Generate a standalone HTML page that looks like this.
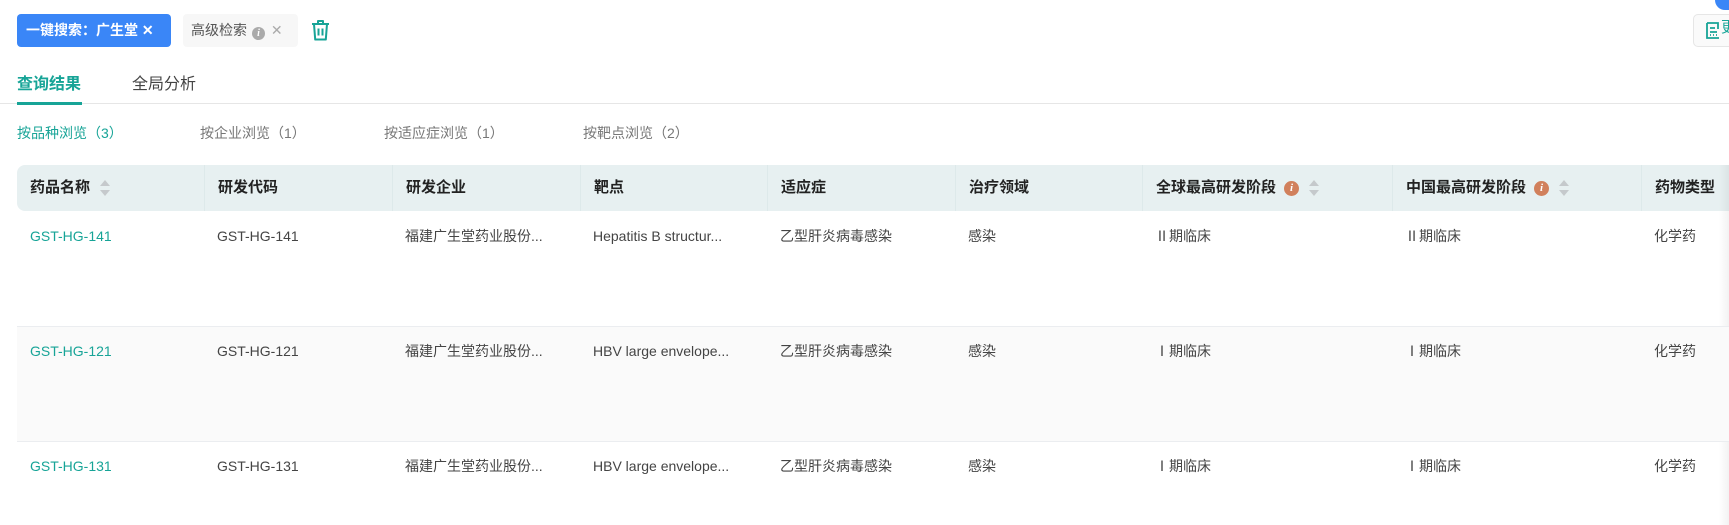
<!DOCTYPE html>
<html><head><meta charset="utf-8"><style>
*{margin:0;padding:0;box-sizing:border-box}
body{width:1729px;height:525px;overflow:hidden;background:#fff;font-family:"Liberation Sans","Noto Sans CJK SC",sans-serif;position:relative;color:#333}
.abs{position:absolute}
.tag1{left:17px;top:14px;width:154px;height:33px;background:#3a86f7;border-radius:4px;color:#fff;font-size:14px;line-height:33px;padding-left:9px;font-weight:bold}
.tag2{left:183px;top:14px;width:115px;height:33px;background:#f7f7f7;border-radius:4px;color:#555;font-size:14px;line-height:33px;padding-left:8px}
.info{display:inline-block;width:13px;height:13px;border-radius:50%;background:#aaa;color:#fff;font-size:10px;line-height:13px;text-align:center;font-style:italic;font-weight:bold;vertical-align:-1px;margin-left:5px;font-family:"Liberation Serif",serif}
.tab{top:70px;font-size:16px}
.line{left:0;top:103px;width:1729px;height:1px;background:#e6e6e6}
.sub{top:123px;font-size:14px;color:#777}
.th{top:165px;height:46px;background:#e7f0f1;left:17px;width:1712px;border-radius:8px 0 0 8px}
.hc{top:165px;height:46px;line-height:46px;font-size:15px;font-weight:bold;color:#222;padding-left:13px;border-left:1px solid #dde9ea}
.sort{display:inline-block;vertical-align:middle;margin-left:10px;width:10px;height:16px;position:relative}
.sort:before{content:"";position:absolute;top:0;left:0;border:5px solid transparent;border-bottom:6px solid #c5c9cc;border-top:0}
.sort:after{content:"";position:absolute;bottom:0;left:0;border:5px solid transparent;border-top:6px solid #c5c9cc;border-bottom:0}
.oi{display:inline-block;width:15px;height:15px;border-radius:50%;background:#d1805c;color:#fff;font-size:11px;line-height:15px;text-align:center;font-style:italic;font-family:"Liberation Serif",serif;vertical-align:middle;margin-left:8px}
.row{left:17px;width:1712px;border-top:1px solid #ebedf0}
.c{font-size:14px;color:#444;padding-left:13px;line-height:20px;height:20px}
.teal{color:#17a497}
</style></head><body>
<div class="abs tag1">一键搜索：广生堂 ✕</div>
<div class="abs tag2">高级检索<span class="info">i</span> <span style="color:#aaa;margin-left:2px">✕</span></div>
<svg class="abs" style="left:310px;top:19px" width="21" height="23" viewBox="0 0 21 23" fill="none" stroke="#17a497" stroke-width="2" stroke-linejoin="round"><path d="M2 5h17M8 5V2h5v3M4 5l1.2 15.5h10.6L17 5M8.5 9.5v7M12.5 9.5v7"/></svg>
<div class="abs" style="left:1693px;top:14px;width:50px;height:33px;border:1px solid #e6e6e6;border-radius:5px;background:#fafafa"></div>
<svg class="abs" style="left:1705px;top:22px" width="16" height="17" viewBox="0 0 16 17" fill="none" stroke="#17a497" stroke-width="1.8"><path d="M2 1h11v6M2 1v15h12M5 6h5M5 10h7M5 13h1M8 13h1M11 13h1"/></svg>
<div class="abs" style="left:1721px;top:16px;font-size:15px;color:#17a497">更</div>
<div class="abs" style="left:1715px;top:-4px;width:18px;height:14px;border-radius:0 0 0 10px;background:#3a86f7"></div>
<div class="abs tab teal" style="left:17px;font-weight:bold">查询结果</div>
<div class="abs tab" style="left:132px;color:#444">全局分析</div>
<div class="abs line"></div>
<div class="abs" style="left:17px;top:102px;width:65px;height:3px;background:#17a497"></div>
<div class="abs sub teal" style="left:17px">按品种浏览（3）</div>
<div class="abs sub" style="left:200px">按企业浏览（1）</div>
<div class="abs sub" style="left:384px">按适应症浏览（1）</div>
<div class="abs sub" style="left:583px">按靶点浏览（2）</div>
<div class="abs th"></div>
<div class="abs hc" style="left:17px;border:0">药品名称<span class="sort"></span></div>
<div class="abs hc" style="left:204px">研发代码</div>
<div class="abs hc" style="left:392px">研发企业</div>
<div class="abs hc" style="left:580px">靶点</div>
<div class="abs hc" style="left:767px">适应症</div>
<div class="abs hc" style="left:955px">治疗领域</div>
<div class="abs hc" style="left:1142px">全球最高研发阶段<span class="oi">i</span><span class="sort"></span></div>
<div class="abs hc" style="left:1392px">中国最高研发阶段<span class="oi">i</span><span class="sort"></span></div>
<div class="abs hc" style="left:1641px;width:88px">药物类型</div>
<div class="abs" style="left:1719px;top:165px;width:10px;height:360px;background:linear-gradient(to right,rgba(0,0,0,0),rgba(0,0,0,0.05))"></div>
<div class="abs row" style="top:326px;height:116px;background:#fafafa"></div>
<div class="abs row" style="top:441px;height:84px"></div>

<div class="abs c teal" style="left:17px;top:226px">GST-HG-141</div>
<div class="abs c" style="left:204px;top:226px">GST-HG-141</div>
<div class="abs c" style="left:392px;top:226px">福建广生堂药业股份...</div>
<div class="abs c" style="left:580px;top:226px">Hepatitis B structur...</div>
<div class="abs c" style="left:767px;top:226px">乙型肝炎病毒感染</div>
<div class="abs c" style="left:955px;top:226px">感染</div>
<div class="abs c" style="left:1142px;top:226px">Ⅱ期临床</div>
<div class="abs c" style="left:1392px;top:226px">Ⅱ期临床</div>
<div class="abs c" style="left:1641px;top:226px">化学药</div>

<div class="abs c teal" style="left:17px;top:341px">GST-HG-121</div>
<div class="abs c" style="left:204px;top:341px">GST-HG-121</div>
<div class="abs c" style="left:392px;top:341px">福建广生堂药业股份...</div>
<div class="abs c" style="left:580px;top:341px">HBV large envelope...</div>
<div class="abs c" style="left:767px;top:341px">乙型肝炎病毒感染</div>
<div class="abs c" style="left:955px;top:341px">感染</div>
<div class="abs c" style="left:1142px;top:341px">Ⅰ期临床</div>
<div class="abs c" style="left:1392px;top:341px">Ⅰ期临床</div>
<div class="abs c" style="left:1641px;top:341px">化学药</div>

<div class="abs c teal" style="left:17px;top:456px">GST-HG-131</div>
<div class="abs c" style="left:204px;top:456px">GST-HG-131</div>
<div class="abs c" style="left:392px;top:456px">福建广生堂药业股份...</div>
<div class="abs c" style="left:580px;top:456px">HBV large envelope...</div>
<div class="abs c" style="left:767px;top:456px">乙型肝炎病毒感染</div>
<div class="abs c" style="left:955px;top:456px">感染</div>
<div class="abs c" style="left:1142px;top:456px">Ⅰ期临床</div>
<div class="abs c" style="left:1392px;top:456px">Ⅰ期临床</div>
<div class="abs c" style="left:1641px;top:456px">化学药</div>
</body></html>
